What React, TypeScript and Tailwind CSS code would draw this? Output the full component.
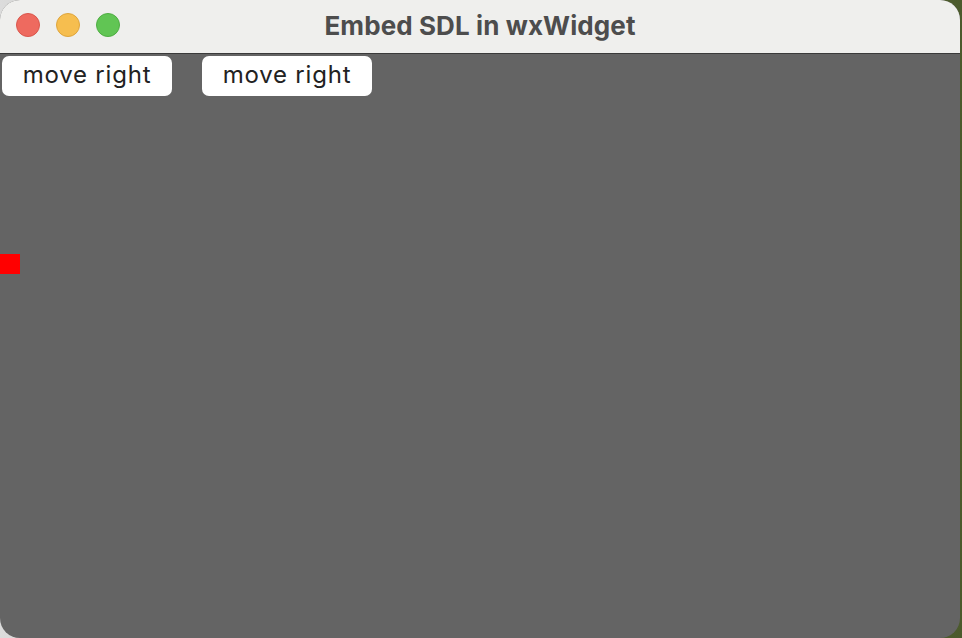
export default function App() {
  return (
    <div className="w-[962px] h-[638px] overflow-hidden bg-gradient-to-r from-[#dcdcdc] via-[#8a9070] to-[#4b5a2c]">
      <div className="w-[960px] h-[638px] rounded-[20px] overflow-hidden flex flex-col bg-[#646464]">
        <div className="relative h-[54px] shrink-0 bg-[#efefed] border-b border-[#3a3a3a] flex items-center justify-center">
          <div className="absolute left-[16px] top-[13px] flex gap-[16px]">
            <span className="w-[24px] h-[24px] rounded-full bg-[#ee6a5f] border border-[#d9574d]" />
            <span className="w-[24px] h-[24px] rounded-full bg-[#f6be4f] border border-[#dea53d]" />
            <span className="w-[24px] h-[24px] rounded-full bg-[#61c554] border border-[#4fad43]" />
          </div>
          <span className="text-[26px] font-bold text-[#4d4d4d] tracking-[0.1px] pb-[3px]" style={{ fontFamily: 'Inter, "Open Sans", sans-serif' }}>
            Embed SDL in wxWidget
          </span>
        </div>
        <div className="flex-1 flex flex-col">
          <div className="flex gap-[30px] px-[2px] pt-[2px]">
            <button className="w-[170px] h-[40px] rounded-[7px] bg-white text-[24px] tracking-[0.8px] text-[#222] flex items-center justify-center pb-[2px]" style={{ fontFamily: 'Inter, "Open Sans", sans-serif' }}>
              move right
            </button>
            <button className="w-[170px] h-[40px] rounded-[7px] bg-white text-[24px] tracking-[0.8px] text-[#222] flex items-center justify-center pb-[2px]" style={{ fontFamily: 'Inter, "Open Sans", sans-serif' }}>
              move right
            </button>
          </div>
          <div className="mt-[158px] w-[20px] h-[20px] bg-[#ff0000]" />
        </div>
      </div>
    </div>
  )
}
